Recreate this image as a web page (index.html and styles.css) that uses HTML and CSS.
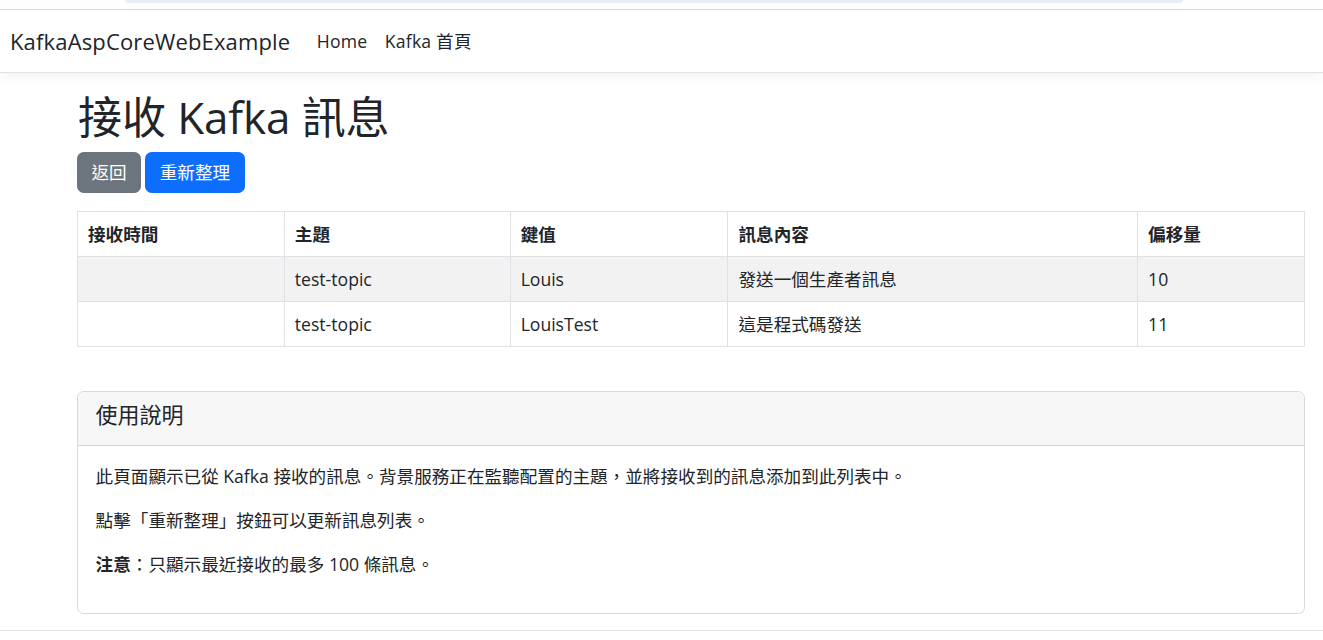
FILE: index.html
```html
<!DOCTYPE html>
<html lang="zh-Hant">
<head>
<meta charset="utf-8">
<title>接收 Kafka 訊息 - KafkaAspCoreWebExample</title>
<link rel="stylesheet" href="styles.css">
</head>
<body>
<div class="topstrip"><div class="topstrip-shape"></div></div>
<header class="navbar">
  <a class="navbar-brand" href="#">KafkaAspCoreWebExample</a>
  <ul class="nav">
    <li><a class="nav-link" href="#">Home</a></li>
    <li><a class="nav-link" href="#">Kafka 首頁</a></li>
  </ul>
</header>
<main class="container">
  <h1 class="page-title">接收 Kafka 訊息</h1>
  <div class="actions">
    <a class="btn btn-secondary" href="#">返回</a>
    <a class="btn btn-primary" href="#">重新整理</a>
  </div>
  <table class="table">
    <thead>
      <tr>
        <th class="col-time">接收時間</th>
        <th class="col-topic">主題</th>
        <th class="col-key">鍵值</th>
        <th class="col-msg">訊息內容</th>
        <th class="col-offset">偏移量</th>
      </tr>
    </thead>
    <tbody>
      <tr class="striped">
        <td></td>
        <td>test-topic</td>
        <td>Louis</td>
        <td>發送一個生產者訊息</td>
        <td>10</td>
      </tr>
      <tr>
        <td></td>
        <td>test-topic</td>
        <td>LouisTest</td>
        <td>這是程式碼發送</td>
        <td>11</td>
      </tr>
    </tbody>
  </table>
  <section class="card">
    <div class="card-header"><h5 class="card-title">使用說明</h5></div>
    <div class="card-body">
      <p>此頁面顯示已從 Kafka 接收的訊息。背景服務正在監聽配置的主題，並將接收到的訊息添加到此列表中。</p>
      <p>點擊「重新整理」按鈕可以更新訊息列表。</p>
      <p><strong>注意</strong>：只顯示最近接收的最多 100 條訊息。</p>
    </div>
  </section>
</main>
<footer class="footer"></footer>
</body>
</html>
```
FILE: styles.css
```css
* { box-sizing: border-box; }
html, body { margin: 0; padding: 0; }
body {
  font-family: "Open Sans", "Noto Sans CJK TC", sans-serif;
  font-size: 17.6px;
  line-height: 1.5;
  color: #212529;
  background: #fff;
}
a { text-decoration: none; color: inherit; }

.topstrip {
  height: 10px;
  border-bottom: 1px solid #dcdcdc;
}
.topstrip-shape {
  margin-left: 125px;
  width: 1058px;
  height: 3px;
  background: #e9eef6;
  border-radius: 0 0 10px 10px;
}

.navbar {
  display: flex;
  align-items: center;
  height: 63px;
  padding: 0 10px;
  border-bottom: 1px solid #dee2e6;
  box-shadow: 0 4px 12px rgba(0,0,0,0.05);
  background: #fff;
}
.navbar-brand {
  font-size: 22px;
  line-height: 33px;
  letter-spacing: 0.15px;
  margin-right: 17.6px;
  color: #212529;
}
.nav {
  display: flex;
  list-style: none;
  margin: 0;
  padding: 0;
}
.nav-link {
  display: block;
  padding: 8.8px;
  line-height: 26.4px;
  letter-spacing: 0.2px;
  color: #212529;
}

.container {
  width: 1228px;
  margin-left: 77px;
  padding-top: 17.6px;
}
.page-title {
  font-size: 44px;
  font-weight: 400;
  line-height: 52.8px;
  letter-spacing: -0.1px;
  margin: 0 0 8.8px 1px;
}
.actions {
  display: flex;
  gap: 4px;
  margin-bottom: 17.6px;
}
.btn {
  display: inline-block;
  padding: 6.3px 13.5px;
  line-height: 26.4px;
  font-size: 17.6px;
  border: 1px solid transparent;
  border-radius: 6.6px;
  color: #fff;
}
.btn-secondary { background: #6c757d; border-color: #6c757d; }
.btn-primary { background: #0d6efd; border-color: #0d6efd; }

.table {
  width: 100%;
  border-collapse: collapse;
  margin-bottom: 44px;
}
.table th, .table td {
  border: 1px solid #dee2e6;
  padding: 8.8px 10px;
  line-height: 26.4px;
  text-align: left;
  vertical-align: top;
}
.table th { font-weight: 700; }
.table .striped td { background: #f2f2f2; }
.col-time { width: 207px; }
.col-topic { width: 226px; }
.col-key { width: 218px; }
.col-msg { width: 410px; }
.col-offset { width: 167px; }

.card {
  border: 1px solid rgba(0,0,0,0.15);
  border-radius: 6.6px;
  overflow: hidden;
  margin-bottom: 16px;
}
.card-header {
  background: #f7f7f7;
  border-bottom: 1px solid rgba(0,0,0,0.15);
  padding: 8.8px 17.6px;
}
.card-title {
  font-size: 22px;
  font-weight: 400;
  line-height: 26.4px;
  margin: 0 0 8.8px 0;
}
.card-body {
  padding: 17.6px;
}
.card-body p {
  margin: 0 0 17.6px 0;
  line-height: 26.4px;
}
.card-body strong { font-weight: 700; }

.footer {
  border-top: 1px solid #dee2e6;
  height: 20px;
}
```
